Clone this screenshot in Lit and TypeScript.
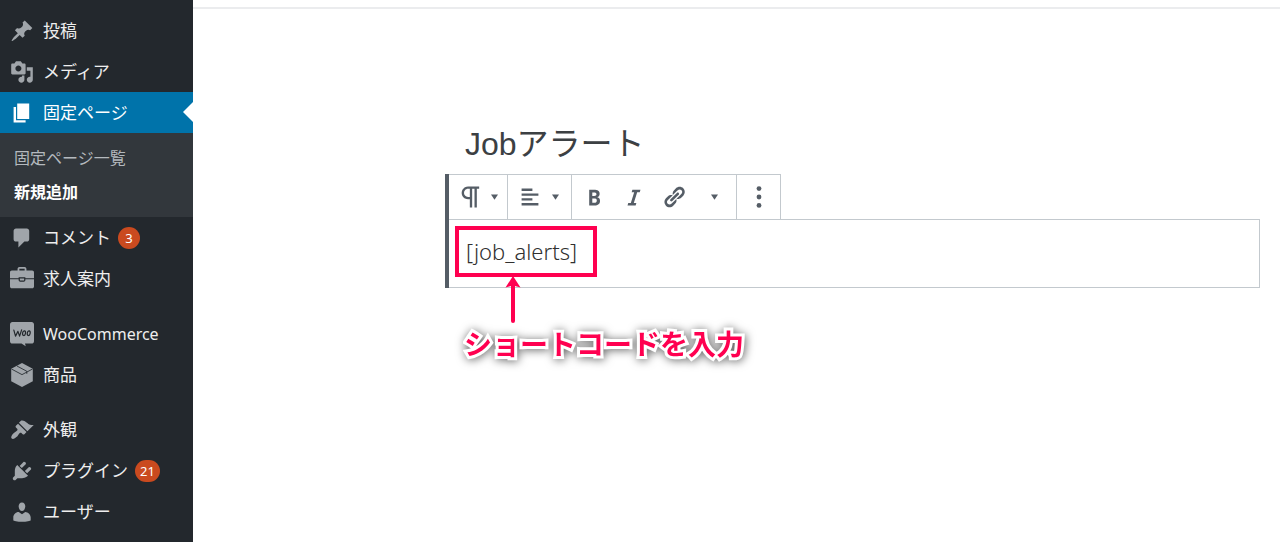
import { LitElement, html, css, svg, nothing } from "lit";
import { customElement } from "lit/decorators.js";
import { classMap } from "lit/directives/class-map.js";

const icons = {
  pin: svg`<path d="M10.44 3.02l1.82-1.82 6.36 6.35-1.83 1.82c-1.05-.68-2.48-.57-3.41.36l-.75.75c-.92.93-1.04 2.35-.35 3.41l-1.83 1.82-2.41-2.41-2.8 2.79c-.42.42-3.38 2.71-3.8 2.29s1.86-3.39 2.28-3.81l2.79-2.79L4.1 9.36l1.83-1.82c1.05.69 2.48.57 3.4-.36l.75-.75c.93-.92 1.05-2.35.36-3.41z"/>`,
  media: svg`<path d="M13 11V4c0-.55-.45-1-1-1h-1.67L9 1H5L3.67 3H2c-.55 0-1 .45-1 1v7c0 .55.45 1 1 1h10c.55 0 1-.45 1-1zM7 4.5c1.38 0 2.5 1.12 2.5 2.5S8.38 9.5 7 9.5 4.5 8.38 4.5 7 5.62 4.5 7 4.5zM14 6h5v10.5c0 1.38-1.12 2.5-2.5 2.5S14 17.88 14 16.5s1.12-2.5 2.5-2.5c.17 0 .34.02.5.05V9h-3V6zm-4 8.05V13h2v3.5c0 1.38-1.12 2.5-2.5 2.5S7 17.88 7 16.5 8.12 14 9.5 14c.17 0 .34.02.5.05z"/>`,
  page: svg`<path d="M6 15V2h10v13H6zm-1 1h8v2H3V5h2v11z"/>`,
  comment: svg`<path d="M5 2h9c1.1 0 2 .9 2 2v7c0 1.1-.9 2-2 2h-2l-5 5v-5H5c-1.1 0-2-.9-2-2V4c0-1.1.9-2 2-2z"/>`,
  job: svg`<path fill-rule="evenodd" d="M6.3 3V1.6C6.3.7 7 0 7.900 0h4.200c.9 0 1.600.7 1.600 1.600V3h4.800c.8 0 1.500.7 1.500 1.500V9.400h-7.200V8.600H7.200v.8H0V4.500C0 3.700.7 3 1.500 3zm1.500 0h4.400V1.500H7.800zM0 10.300h7.200v.6c0 .8.6 1.400 1.400 1.400h2.800c.8 0 1.400-.6 1.400-1.400v-.6H20v5.900c0 .8-.7 1.500-1.500 1.500h-17C.7 17.700 0 17 0 16.200zM8.200 9.600h3.600v1.600H8.200z"/>`,
  woo: svg`<path d="M2 0h16c1.100 0 2 .9 2 2v14c0 1.100-.9 2-2 2h-5.500l.6 2.200L9.600 18H2c-1.100 0-2-.9-2-2V2C0 .9.900 0 2 0z"/><g fill="none" stroke="#23282d" stroke-width="1" stroke-linecap="round" stroke-linejoin="round"><path d="M3.200 6.800l1.400 5 2-4 1.400 4 1.700-5.200"/><ellipse cx="11.700" cy="9.300" rx="1.200" ry="2" transform="rotate(10 11.700 9.300)"/><ellipse cx="15.600" cy="9.300" rx="1.200" ry="2" transform="rotate(10 15.600 9.300)"/></g>`,
  box: svg`<path d="M10 0l9 4.700v10.600L10 20l-9-4.700V4.700z"/><path fill="none" stroke="#23282d" stroke-width=".7" d="M1.200 5L10 9.700 18.800 5M5.800 2.500L14 6.900V9"/>`,
  brush: svg`<path d="M14.480 11.060L7.410 3.990l1.500-1.500c.5-.56 2.300-.47 3.510.32 1.210.8 1.430 1.280 2.910 2.100 1.180.64 2.450 1.260 4.450.85zm-.71.71L6.700 4.700 4.930 6.470c-.39.39-.39 1.020 0 1.410l1.060 1.060c.39.39.39 1.030 0 1.420-.6.6-1.430 1.110-2.210 1.690-.35.26-.7.53-1.010.84C1.430 14.230.4 16.080 1.400 17.070c.99 1 2.840-.03 4.180-1.360.31-.31.58-.66.85-1.020.57-.78 1.080-1.610 1.690-2.210.39-.39 1.020-.39 1.410 0l1.060 1.060c.39.39 1.020.39 1.410 0z"/>`,
  plug: svg`<path d="M13.110 4.360L9.870 7.600 8 5.730l3.240-3.240c.35-.34 1.050-.2 1.560.32.52.51.66 1.210.31 1.550zm-8 1.770l.91-1.120 9.010 9.010-1.190.84c-.71.71-2.630 1.160-3.820 1.160H6.140L4.900 17.260c-.59.59-1.540.59-2.120 0-.59-.58-.59-1.530 0-2.120l1.240-1.240v-3.880c0-1.130.4-3.190 1.090-3.890zm7.260 3.970l3.240-3.240c.34-.35 1.040-.21 1.550.31.52.51.66 1.210.31 1.550l-3.240 3.250z"/>`,
  user: svg`<path d="M10 9.250c-2.270 0-2.730-3.440-2.730-3.440C7 4.020 7.820 2 9.970 2c2.160 0 2.980 2.020 2.710 3.810 0 0-.41 3.440-2.680 3.440zm0 2.570L12.720 10c2.390 0 4.520 2.330 4.520 4.530v2.490s-3.650 1.130-7.240 1.130c-3.650 0-7.240-1.130-7.240-1.130v-2.490c0-2.250 1.940-4.480 4.470-4.480z"/>`,
  tools: svg`<path d="M16.680 9.770c-1.340 1.340-3.300 1.670-4.950.99l-5.410 6.520c-.99.99-2.590.99-3.580 0s-.99-2.590 0-3.570l6.520-5.420c-.68-1.650-.35-3.610.99-4.950 1.280-1.280 3.120-1.620 4.720-1.060l-2.890 2.890 2.820 2.820 2.860-2.870c.53 1.580.18 3.390-1.080 4.650z"/>`,
  paragraph: svg`<path transform="scale(.8333)" d="M11 5v7H9.500C7.600 12 6 10.400 6 8.500S7.600 5 9.500 5H11m8-2H9.500C6.500 3 4 5.500 4 8.500S6.500 14 9.500 14H11v7h2V5h2v16h2V5h2V3z"/>`,
  align: svg`<path d="M12 5V3H3v2h9zm5 4V7H3v2h14zm-5 4v-2H3v2h9zm5 4v-2H3v2h14z"/>`,
  bold: svg`<path d="M6 4v13h4.540c1.370 0 2.460-.33 3.260-1 .8-.66 1.200-1.580 1.200-2.770 0-.84-.17-1.510-.51-2.010s-.9-.85-1.670-1.030v-.09c.57-.1 1.020-.4 1.360-.9s.51-1.130.51-1.910c0-1.140-.39-1.980-1.170-2.500C12.750 4.260 11.500 4 9.780 4H6zm2.570 5.150V6.260h1.360c.73 0 1.270.11 1.610.32.34.22.51.58.51 1.070 0 .54-.16.92-.47 1.150s-.82.35-1.510.35h-1.500zm0 2.190h1.600c1.440 0 2.160.53 2.160 1.610 0 .6-.17 1.050-.51 1.340s-.86.43-1.570.43H8.570v-3.380z"/>`,
  italic: svg`<path d="M14.780 6h-2.130l-2.800 9h2.120l-.62 2H4.600l.62-2h2.140l2.800-9H8.030l.62-2h6.750z"/>`,
  link: svg`<path d="M17.740 2.760c1.680 1.690 1.680 4.410 0 6.100l-1.530 1.520c-1.120 1.120-2.700 1.470-4.140 1.090l2.620-2.610.76-.77.76-.76c.84-.84.84-2.200 0-3.040-.84-.85-2.200-.85-3.040 0l-.77.76-3.380 3.380c-.37-1.440-.02-3.020 1.100-4.140l1.520-1.530c1.690-1.680 4.420-1.680 6.100 0zM8.590 13.430l5.340-5.340c.42-.42.42-1.100 0-1.520-.44-.43-1.130-.39-1.530 0l-5.330 5.340c-.42.42-.42 1.100 0 1.520.44.43 1.130.39 1.520 0zm-.76 2.290l4.140-4.150c.38 1.440.03 3.020-1.090 4.140l-1.520 1.530c-1.690 1.680-4.410 1.680-6.100 0-1.680-1.680-1.680-4.420 0-6.100l1.530-1.520c1.120-1.120 2.700-1.470 4.140-1.100l-4.140 4.150c-.85.84-.85 2.200 0 3.050.84.84 2.200.84 3.040 0z"/>`,
  more: svg`<circle cx="10" cy="3" r="2"/><circle cx="10" cy="10" r="2"/><circle cx="10" cy="17" r="2"/>`,
};
type IconName = keyof typeof icons;

const icon = (name: IconName) =>
  html`<svg class="icon ${name}" viewBox="0 0 20 20" aria-hidden="true">${icons[name]}</svg>`;
const caret = html`<svg class="caret" viewBox="0 0 8 6" aria-hidden="true"><path d="M0 0h8L4 6z"/></svg>`;

interface Item {
  label: string;
  icon: IconName;
  count?: number;
  current?: boolean;
  latin?: boolean;
}

const groups: Item[][] = [
  [
    { label: "投稿", icon: "pin" },
    { label: "メディア", icon: "media" },
    { label: "固定ページ", icon: "page", current: true },
    { label: "コメント", icon: "comment", count: 3 },
    { label: "求人案内", icon: "job" },
  ],
  [
    { label: "WooCommerce", icon: "woo", latin: true },
    { label: "商品", icon: "box" },
  ],
  [
    { label: "外観", icon: "brush" },
    { label: "プラグイン", icon: "plug", count: 21 },
    { label: "ユーザー", icon: "user" },
    { label: "", icon: "tools" },
  ],
];

@customElement("admin-menu")
export class AdminMenu extends LitElement {
  static styles = css`
    :host { display: block; background: #23282d; overflow: hidden; padding-top: 10px; }
    nav { display: flex; flex-direction: column; gap: 14px; }
    ul { list-style: none; margin: 0; padding: 0; }
    a { text-decoration: none; color: inherit; }
    .item {
      display: flex; align-items: center; height: 41px; gap: 9px; padding-left: 10px;
      color: #eee; font-size: 17px; line-height: 24px; position: relative;
    }
    .latin { font-size: 16px; }
    .icon { width: 24px; height: 24px; fill: #a0a5aa; flex: none; overflow: visible; }
    .item.current { background: #0073aa; color: #fff; }
    .item.current .icon { fill: #fff; }
    .item.current::after {
      content: ""; position: absolute; right: 0; top: 10px;
      border: 10px solid transparent; border-left: 0; border-right-color: #fff;
    }
    .count {
      min-width: 22px; height: 22px; border-radius: 11px; box-sizing: border-box; padding: 0 5px;
      background: #ca4a1f; color: #fff; font-size: 13px; line-height: 22px; text-align: center;
      margin-left: -2px;
    }
    .sub {
      background: #32373c; padding: 8px 14px; height: 84px; box-sizing: border-box;
      font-size: 16px; line-height: 34px; color: #b4b9be;
    }
    .sub .active { color: #fff; font-weight: 700; }
  `;
  render() {
    return html`<nav aria-label="管理メニュー">
      ${groups.map((g) => html`<ul>
        ${g.map((i) => html`<li>
          <a href="#" class=${classMap({ item: true, current: !!i.current })}>
            ${icon(i.icon)}<span class=${classMap({ latin: !!i.latin })}>${i.label}</span>
            ${i.count ? html`<span class="count">${i.count}</span>` : nothing}
          </a>
          ${i.current
            ? html`<ul class="sub">
                <li><a href="#">固定ページ一覧</a></li>
                <li class="active"><a href="#">新規追加</a></li>
              </ul>`
            : nothing}
        </li>`)}
      </ul>`)}
    </nav>`;
  }
}

@customElement("block-editor")
export class BlockEditor extends LitElement {
  static styles = css`
    :host { display: block; padding: 7px 0 0; }
    .page { border-top: 2px solid #ebecee; padding: 111px 20px 0 252px; }
    .title {
      display: block; width: 100%; box-sizing: border-box; border: 0; outline: 0; background: none;
      margin: 0; padding: 0 20px; height: 48px; color: #3c4043;
      font: 400 32px/48px "Liberation Sans", "Noto Sans CJK JP", sans-serif;
    }
    .block { position: relative; border-left: 4px solid #555d66; margin-top: 6px; }
    .toolbar { display: flex; width: max-content; height: 45px; border: 1px solid #c3c9ce; border-width: 1px 1px 0 0; box-sizing: border-box; }
    .group { display: flex; align-items: center; box-sizing: border-box; }
    .group + .group { border-left: 1px solid #c3c9ce; }
    button {
      border: 0; background: none; margin: 0; padding: 0; height: 44px; width: 40px;
      display: flex; align-items: center; justify-content: center;
    }
    .wide { width: 58px; gap: 10px; padding-left: 2px; }
    .group + .group .wide { width: 63px; padding: 0 2px 0 0; }
    .formats { padding: 0 2px; }
    .options button { width: 43px; }
    .icon { width: 24px; height: 24px; fill: #555d66; flex: none; }
    .paragraph { width: 28px; height: 28px; margin: 0 -4px; }
    .more { overflow: visible; }
    .caret { width: 7px; height: 6px; fill: #555d66; }
    .body {
      border: 1px solid #c3c9ce; border-left: 0; padding: 17px 17px 21px; color: #303030;
      font: 300 22px/29px "Noto Sans", "Noto Sans CJK JP", sans-serif;
    }
    .body p { margin: 0; }
    .mark {
      position: absolute; left: 6px; top: 52px; width: 142px; height: 51px; box-sizing: border-box;
      border: 4px solid #ff0050;
    }
    .note { position: absolute; left: 15px; top: 101px; }
    .arrow { display: block; width: 16px; height: 48px; margin-left: 41px; fill: #ff0050; }
    .label {
      margin: 0; white-space: nowrap; color: #ff0050; font: 700 28px/40px "Noto Sans CJK JP", sans-serif;
      -webkit-text-stroke: 6px #fff; paint-order: stroke fill; stroke-linejoin: round;
      filter: drop-shadow(1px 1px 5px rgba(0, 0, 0, 0.6));
    }
  `;
  render() {
    return html`<div class="page">
      <input class="title" aria-label="タイトル" .value=${"Jobアラート"} />
      <div class="block">
        <div class="toolbar" role="toolbar">
          <div class="group"><button class="wide" aria-label="段落">${icon("paragraph")}${caret}</button></div>
          <div class="group"><button class="wide" aria-label="配置">${icon("align")}${caret}</button></div>
          <div class="group formats">
            <button aria-label="太字">${icon("bold")}</button>
            <button aria-label="イタリック">${icon("italic")}</button>
            <button aria-label="リンク">${icon("link")}</button>
            <button aria-label="その他の書式">${caret}</button>
          </div>
          <div class="group options"><button aria-label="詳細設定">${icon("more")}</button></div>
        </div>
        <div class="body"><p>[job_alerts]</p></div>
        <div class="mark"></div>
        <div class="note">
          <svg class="arrow" viewBox="0 0 16 48" aria-hidden="true">
            <path d="M8 1l7.500 11.500-5.500-1.500v35a2 2 0 0 1-4 0V11L.5 12.500z"/>
          </svg>
          <p class="label">ショートコードを入力</p>
        </div>
      </div>
    </div>`;
  }
}

@customElement("app-root")
export class AppRoot extends LitElement {
  static styles = css`
    :host {
      display: grid; grid-template-columns: 193px minmax(0, 1fr); height: 100vh; overflow: hidden;
      background: #fff; font-family: "Noto Sans", "Noto Sans CJK JP", sans-serif;
    }
  `;
  render() {
    return html`<admin-menu></admin-menu><block-editor></block-editor>`;
  }
}
